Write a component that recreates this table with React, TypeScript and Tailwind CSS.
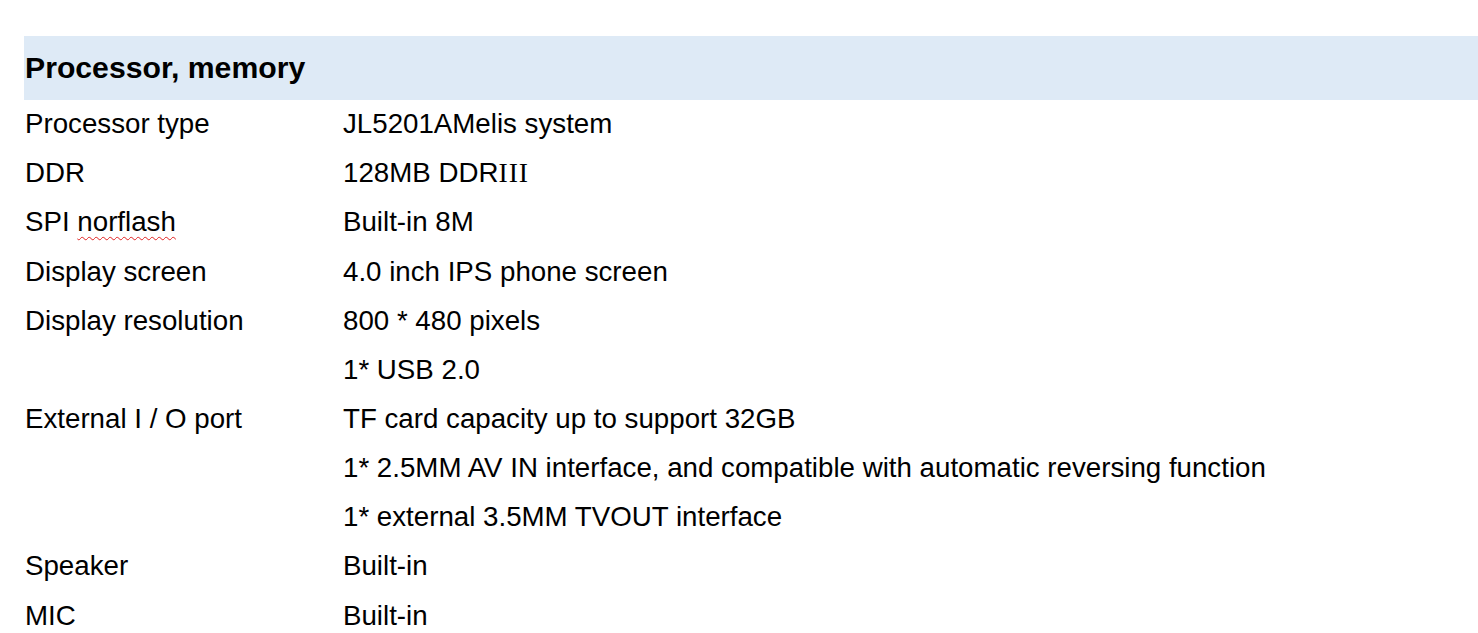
import React from "react";

const rows: { label: React.ReactNode; value: React.ReactNode }[] = [
  { label: "Processor type", value: "JL5201AMelis system" },
  {
    label: "DDR",
    value: (
      <>
        128MB DDR
        <span className="font-['Liberation_Serif',serif] tracking-[1px]">III</span>
      </>
    ),
  },
  {
    label: (
      <>
        SPI{" "}
        <span className="underline decoration-wavy decoration-[#e02020] decoration-1 underline-offset-[5px]">
          norflash
        </span>
      </>
    ),
    value: "Built-in 8M",
  },
  { label: "Display screen", value: "4.0 inch IPS phone screen" },
  { label: "Display resolution", value: "800 * 480 pixels" },
  { label: "", value: "1* USB 2.0" },
  { label: "External I / O port", value: "TF card capacity up to support 32GB" },
  { label: "", value: "1* 2.5MM AV IN interface, and compatible with automatic reversing function" },
  { label: "", value: "1* external 3.5MM TVOUT interface" },
  { label: "Speaker", value: "Built-in" },
  { label: "MIC", value: "Built-in" },
];

export default function App() {
  return (
    <div className="w-[1478px] h-[633px] overflow-hidden bg-white text-black font-['Liberation_Sans',Arial,sans-serif]">
      <div className="pt-[36px] pl-[24px]">
        <div className="h-[64px] bg-[#deeaf6] flex items-center pl-[1px]">
          <span className="text-[30.2px] font-bold leading-none">Processor, memory</span>
        </div>
        <div className="flex flex-col -mt-[0.6px]">
          {rows.map((r, i) => (
            <div key={i} className="flex h-[49.15px] items-center text-[27.7px] leading-none">
              <div className="w-[319px] pl-[1px] shrink-0">{r.label}</div>
              <div className="whitespace-nowrap">{r.value}</div>
            </div>
          ))}
        </div>
      </div>
    </div>
  );
}
